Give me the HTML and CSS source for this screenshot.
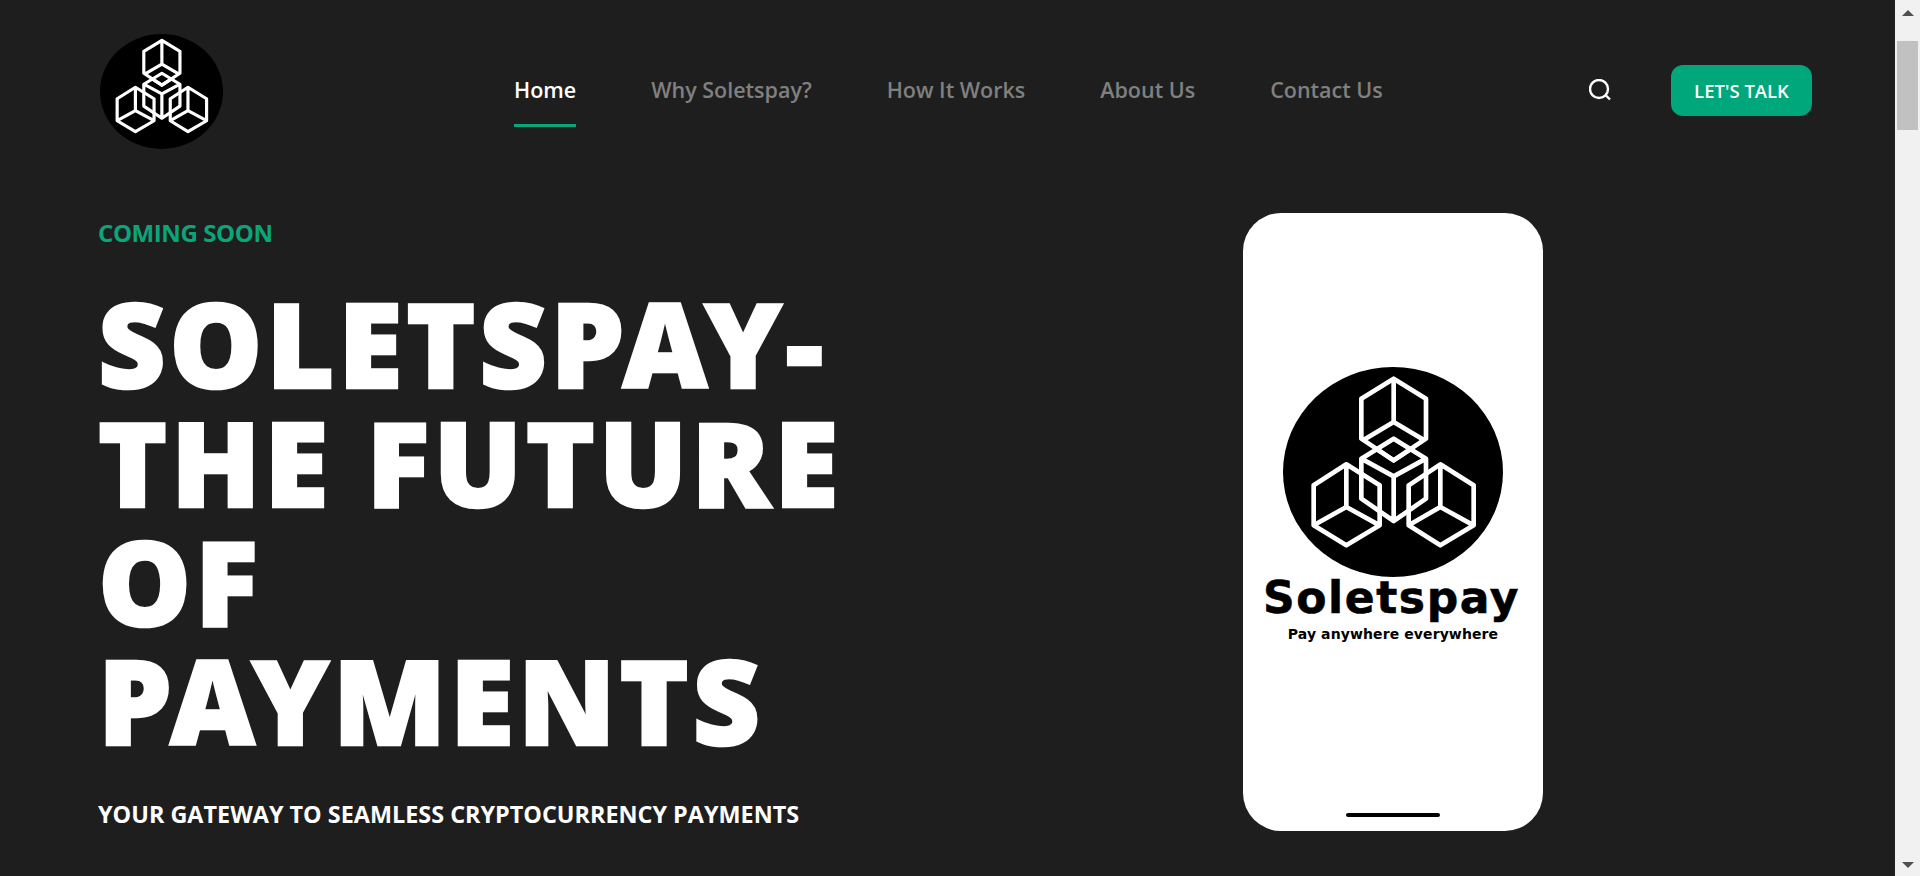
FILE: index.html
```html
<!DOCTYPE html>
<html lang="en">

<head>
    <meta charset="UTF-8" />
    <meta name="viewport" content="width=device-width, initial-scale=1.0" />
    <title>Soletspay</title>
    <link rel="stylesheet" href="styles.css">
</head>

<body>
    <svg class="defs" width="0" height="0" aria-hidden="true">
        <symbol id="logo" viewBox="0 0 660 630" preserveAspectRatio="none">
            <ellipse cx="330" cy="315" rx="330" ry="315" fill="#000" />
            <g class="logo-lines" fill="none" stroke="#fff" stroke-linejoin="round">
                <path d="M332 35 L429 95 V215 L332 280 L235 215 V95 Z M332 35 V165 M240 220 L332 165 L424 220" />
                <path d="M332 215 L429 275 V395 L332 462 L235 395 V275 Z M235 275 L332 328 L429 275 M332 328 V462 M282 247 L332 280 L382 247" />
                <path d="M190 292 L290 355 V475 L190 535 L92 475 V355 Z M190 292 V420 M92 475 L190 420 L290 475" />
                <path d="M472 292 L572 355 V475 L472 535 L377 475 V355 Z M472 292 V420 M377 475 L472 420 L572 475" />
            </g>
        </symbol>
    </svg>

    <div class="page">
        <header class="site-header">
            <svg class="site-logo" role="img" aria-label="Soletspay logo"><use href="#logo" /></svg>
            <nav class="main-nav">
                <a class="active" href="#">Home</a>
                <a href="#">Why Soletspay?</a>
                <a href="#">How It Works</a>
                <a href="#">About Us</a>
                <a href="#">Contact Us</a>
            </nav>
            <div class="header-actions">
                <svg class="search-icon" viewBox="0 0 22 22" aria-label="Search">
                    <circle cx="10" cy="10" r="9" />
                    <path d="M17 16.5 L21 20.5" />
                </svg>
                <a class="btn-talk" href="#">LET'S TALK</a>
            </div>
        </header>

        <main class="hero">
            <div class="hero-text">
                <p class="eyebrow">COMING SOON</p>
                <h1>SOLETSPAY-<br>THE FUTURE<br>OF<br>PAYMENTS</h1>
                <p class="tagline">YOUR GATEWAY TO SEAMLESS CRYPTOCURRENCY PAYMENTS</p>
            </div>
            <div class="phone">
                <svg class="phone-logo" role="img" aria-label="Soletspay logo"><use href="#logo" /></svg>
                <div class="brand-name">Soletspay</div>
                <div class="brand-line">Pay anywhere everywhere</div>
                <span class="home-bar"></span>
            </div>
        </main>
    </div>

    <div class="scrollbar">
        <span class="arrow-up"></span>
        <span class="thumb"></span>
        <span class="arrow-down"></span>
    </div>
</body>

</html>
```

FILE: styles.css
```css
body {
    margin: 0;
    height: 876px;
    overflow: hidden;
    display: flex;
    background-color: #1e1e1e;
    font-family: "Open Sans", "Noto Sans", sans-serif;
    color: white;
}

.defs {
    position: absolute;
}

.logo-lines {
    stroke-width: var(--logo-stroke, 14);
}

.page {
    flex: 1;
    min-width: 0;
}

/* header */
.site-header {
    display: flex;
    align-items: center;
    padding: 34px 83px 0 100px;
}

.site-logo {
    --logo-stroke: 17;
    width: 123px;
    height: 115px;
}

.main-nav {
    display: flex;
    gap: 75px;
    margin-left: 291px;
    margin-bottom: 5px;
}

.main-nav a {
    position: relative;
    padding: 12px 0;
    color: #808080;
    font-size: 21.5px;
    font-weight: 600;
    text-decoration: none;
}

.main-nav a.active {
    color: white;
}

.main-nav a.active::after {
    content: "";
    position: absolute;
    left: 0;
    right: 0;
    bottom: -11px;
    height: 3px;
    background-color: #0aa67a;
}

.header-actions {
    display: flex;
    align-items: center;
    margin-left: auto;
    margin-bottom: 3px;
    gap: 60px;
}

.search-icon {
    width: 22px;
    height: 22px;
    fill: none;
    stroke: white;
    stroke-width: 2.4;
}

.btn-talk {
    display: block;
    width: 141px;
    height: 51px;
    line-height: 51px;
    text-align: center;
    border-radius: 12px;
    background-color: #00a77a;
    color: white;
    font-size: 18.5px;
    font-weight: 600;
    text-decoration: none;
}

/* hero */
.hero {
    display: flex;
    margin-top: 64px;
    padding-left: 98px;
}

.hero-text {
    width: 1145px;
}

.eyebrow {
    margin: 0;
    padding-top: 3px;
    color: #0aa67a;
    font-size: 24px;
    font-weight: 700;
    letter-spacing: -0.4px;
    line-height: 33px;
}

h1 {
    margin: 34px 0 0;
    font-family: "Noto Sans", "Open Sans", sans-serif;
    font-size: 117px;
    font-weight: 900;
    letter-spacing: 3.8px;
    -webkit-text-stroke: 2.5px white;
    line-height: 119px;
}

.tagline {
    margin: 39px 0 0;
    font-size: 23.4px;
    font-weight: 700;
    line-height: 32px;
}

.phone {
    position: relative;
    width: 300px;
    height: 618px;
    padding-top: 154px;
    box-sizing: border-box;
    border-radius: 38px;
    background-color: white;
    color: black;
    display: flex;
    flex-direction: column;
    align-items: center;
    font-family: "DejaVu Sans", sans-serif;
    font-weight: 700;
}

.phone-logo {
    width: 220px;
    height: 210px;
    flex: none;
}

.brand-name {
    margin: -5px 3px 0 0;
    font-size: 44px;
    letter-spacing: 1.6px;
    -webkit-text-stroke: 0.6px black;
    line-height: 52px;
}

.brand-line {
    font-size: 14px;
    letter-spacing: 0.1px;
    line-height: 20px;
}

.home-bar {
    position: absolute;
    left: 103px;
    bottom: 14px;
    width: 94px;
    height: 4px;
    border-radius: 2px;
    background-color: black;
}

/* fake browser scrollbar */
.scrollbar {
    width: 25px;
    flex: none;
    background-color: #f1f1f1;
    display: flex;
    flex-direction: column;
    align-items: center;
    padding-top: 10px;
    box-sizing: border-box;
}

.arrow-up {
    border-left: 6px solid transparent;
    border-right: 6px solid transparent;
    border-bottom: 6px solid #505050;
}

.thumb {
    width: 21px;
    height: 89px;
    margin-top: 25px;
    background-color: #c1c1c1;
}

.arrow-down {
    margin-top: auto;
    margin-bottom: 8px;
    border-left: 6px solid transparent;
    border-right: 6px solid transparent;
    border-top: 6px solid #505050;
}
```
